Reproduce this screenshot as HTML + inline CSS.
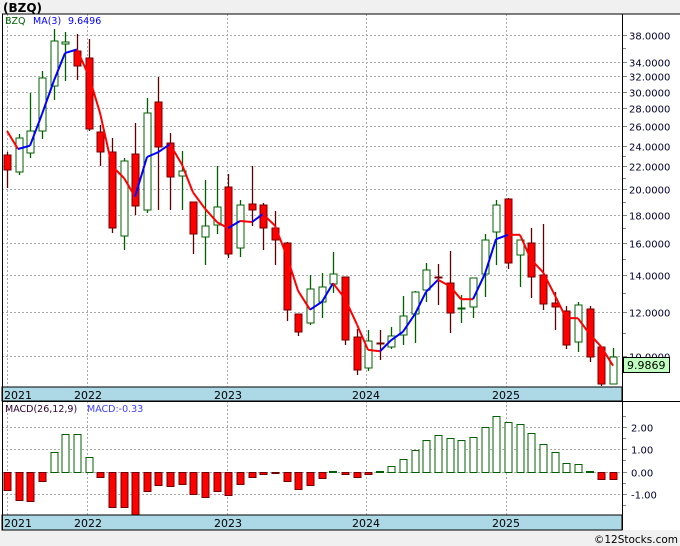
<!DOCTYPE html>
<html><head><meta charset="utf-8"><style>
html,body{margin:0;padding:0;background:#fff;width:680px;height:546px;overflow:hidden}
svg{display:block;font-family:"DejaVu Sans","Liberation Sans",sans-serif}
</style></head><body>
<svg id="s" width="680" height="546" xmlns="http://www.w3.org/2000/svg">
<rect x="0" y="0" width="680" height="546" fill="#fff"/>
<rect x="0" y="0" width="680" height="14" fill="#f0f0f0"/>
<text x="3" y="12" font-size="12" font-weight="bold" fill="#000">(BZQ)</text>
<rect x="0" y="530" width="680" height="16" fill="#f0f0f0"/>
<text x="678" y="543" font-size="10.5" text-anchor="end" fill="#000">©12Stocks.com</text>
<g id="g"></g>
</svg>
<script>
var g=document.getElementById('g'),h='';
function L(x1,y1,x2,y2,c,w,d){h+='<line x1="'+x1+'" y1="'+y1+'" x2="'+x2+'" y2="'+y2+'" stroke="'+c+'" stroke-width="'+(w||1)+'"'+(d?' stroke-dasharray="'+d+'"':'')+'/>';}
function R(x,y,w,hh,f,s){h+='<rect x="'+x+'" y="'+y+'" width="'+w+'" height="'+hh+'" fill="'+f+'" stroke="'+s+'" stroke-width="1"/>';}
function T(x,y,t,c,sz,a){h+='<text x="'+x+'" y="'+y+'" font-size="'+(sz||10)+'" fill="'+c+'"'+(a?' text-anchor="'+a+'"':'')+'>'+t+'</text>';}
function Y(p){return 356-240.4*Math.log(p/10);}
var labs=[38,34,32,30,28,26,24,22,20,18,16,14,12,10];
labs.forEach(function(p){var y=Math.round(Y(p))+.5;L(2,y,622,y,'#aaa',1,'2,2');L(622,y,627,y,'#888');T(629,y+4,p.toFixed(4),'#000030',10);});
[36,23,21,19,17,15,13,11].forEach(function(p){var y=Math.round(Y(p))+.5;L(622,y,626,y,'#888');});
[7,87,227,366,506].forEach(function(x){L(x+.5,14,x+.5,387,'#aaa',1,'2,2');L(x+.5,401,x+.5,515,'#aaa',1,'2,2');});
[[427,'2.00'],[449,'1.00'],[472,'0.00'],[494,'-1.00']].forEach(function(a){var y=a[0]+.5;L(2,y,622,y,'#aaa',1,'2,2');L(622,y,627,y,'#888');T(631,y+4,a[1],'#000030',10);});
[416,438,460,483,505].forEach(function(y){L(622,y+.5,626,y+.5,'#888');});
var C=[[155,170,152,188,'r'],[138,172,134,175,'g'],[131,153,93,158,'g'],[78,131,71,139,'g'],[41,86,29,100,'g'],[42,44,32,81,'g'],[51,66,34,80,'r'],[58,129,39,131,'r'],[132,152,125,166,'r'],[152,228,138,233,'r'],[161,236,158,250,'g'],[154,206,123,215,'r'],[113,210,98,213,'g'],[102,147,77,210,'r'],[143,177,133,210,'r'],[171,176,151,210,'g'],[202,234,202,254,'r'],[226,237,180,265,'g'],[207,225,166,234,'g'],[187,254,174,258,'r'],[205,248,200,257,'g'],[204,210,166,226,'r'],[205,228,203,250,'r'],[228,240,211,265,'r'],[243,310,242,321,'r'],[314,332,314,336,'r'],[289,323,275,325,'g'],[287,302,273,318,'g'],[274,284,252,293,'g'],[277,340,277,345,'r'],[337,370,329,375,'r'],[341,368,330,371,'g'],[343,344,330,360,'r'],[336,347,327,349,'g'],[316,335,296,345,'g'],[292,314,291,343,'g'],[270,290,263,302,'g'],[277,278,264,305,'r'],[283,313,251,333,'r'],[308,309,295,323,'g'],[278,307,278,318,'g'],[240,274,234,297,'g'],[205,232,200,265,'g'],[199,263,198,269,'r'],[240,255,240,287,'g'],[243,277,228,298,'r'],[275,304,224,310,'r'],[303,307,292,330,'r'],[311,345,306,349,'r'],[305,342,302,352,'g'],[309,357,306,362,'r'],[347,384,347,386,'r'],[357,384,348,384,'g']];
function X(i){return Math.round(7+11.65*i);}
var closes=[];
C.forEach(function(c,i){var x=X(i)+.5,red=c[4]=='r';var wc=red?'#600000':'#006000';
L(x,c[2],x,c[3],wc,1.3);
var hh=Math.max(1,c[1]-c[0]);
if(red)R(x-3.5,c[0],7,hh,'#ff0000','#700000');else R(x-3.5,c[0],7,hh,'#fff','#006000');
closes.push(10*Math.exp((356-(red?c[1]:c[0]))/240.4));});
var pts=[[7,131],[18,149]];
for(var i=2;i<closes.length;i++){var m=(closes[i]+closes[i-1]+closes[i-2])/3;pts.push([X(i),Y(m)]);}
for(var i=1;i<pts.length;i++){var c=pts[i][1]<pts[i-1][1]?'#0000ff':'#ff0000';L(pts[i-1][0],pts[i-1][1].toFixed(1),pts[i][0],pts[i][1].toFixed(1),c,2);}
var M=[490,500,501,481,452,434,434,457,477,507,507,515,491,485,486,484,494,497,491,495,484,477,474,473,481,489,485,478,471,474,477,474,471,466,459,450,440,435,438,440,437,427,416,422,424,433,444,452,463,464,471,479,479];
M.forEach(function(y,i){var x=X(i);
if(y>472){R(x-3.5+.5,472.5,7,y-472,'#ff0000','#700000');}
else if(y<471){R(x-3.5+.5,y+.5,7,472-y,'#fff','#006000');}
else{L(x-4,472,x+4,472,'#006000',2);}});
R(2,387,620,14,'#add8e6','#000');R(2,515,620,15,'#add8e6','#000');
[[5,'2021'],[88,'2022'],[228,'2023'],[366,'2024'],[506,'2025']].forEach(function(a){var x=a[0]==5?4:a[0]-14;T(x,399,a[1],'#000',11);T(x,527,a[1],'#000',11);});
L(2,14,680,14,'#000');L(2,401.5,680,401.5,'#000');L(622.5,14,622.5,530,'#000');L(2.5,14,2.5,530,'#000');
T(5,24,'BZQ','#006000',9.5);T(33,24,'MA(3)','#0000ff',9.5);T(68,24,'9.6496','#0000ff',9.5);
T(5,412,'MACD(26,12,9)','#300030',9.5);T(87,412,'MACD:-0.33','#4040ff',9.5);
R(623.5,357.5,46,15,'#c0ffc0','#000');T(627,369,'9.9869','#000',11);
g.innerHTML=h;
</script>
</body></html>
